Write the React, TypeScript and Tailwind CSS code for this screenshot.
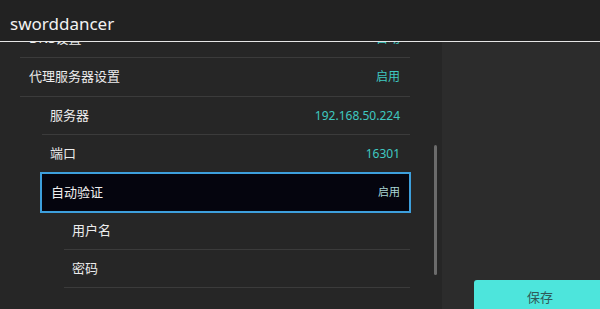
import React from "react";

interface Row {
  label: string;
  value?: string;
  level: 0 | 1 | 2;
  focused?: boolean;
}

const rows: Row[] = [
  { label: "DNS设置", value: "自动", level: 0 },
  { label: "代理服务器设置", value: "启用", level: 0 },
  { label: "服务器", value: "192.168.50.224", level: 1 },
  { label: "端口", value: "16301", level: 1 },
  { label: "自动验证", value: "启用", level: 1, focused: true },
  { label: "用户名", level: 2 },
  { label: "密码", level: 2 },
];

const indent = ["ml-[20px] h-[39px] pl-[9px]", "ml-[42px] h-[38px] pl-[8px]", "ml-[64px] h-[38px] pl-[8px]"];

const SettingRow = ({ row }: { row: Row }) => {
  if (row.focused) {
    return (
      <div className="ml-[40px] mr-[31px] -my-[1px] h-[41px] flex items-center justify-between border-2 border-[#3d9fdc] bg-[#05050e] pl-[9px] pr-[9px] relative z-[1]">
        <span className="text-[13px] text-[#f0f0f0]">{row.label}</span>
        <span className="text-[11px] text-[#a9d6d6]">{row.value}</span>
      </div>
    );
  }
  return (
    <div className={`${indent[row.level]} mr-[32px] flex items-center justify-between border-b border-[#3b3b3b] pr-[10px] first:h-[38px]`}>
      <span className="text-[13px] text-[#ececec]">{row.label}</span>
      {row.value && <span className="text-[12px] text-[#3fc9c1]">{row.value}</span>}
    </div>
  );
};

export default function App() {
  return (
    <div
      className="w-[600px] h-[309px] overflow-hidden bg-[#262626] flex flex-col"
      style={{ fontFamily: "'Noto Sans', 'Noto Sans CJK SC', sans-serif" }}
    >
      <header className="relative z-10 h-[42px] shrink-0 bg-[#222222] border-b border-[#e6e6e6] flex items-center pl-[10px] pt-[5px]">
        <span className="text-[17px] text-[#f2f2f2] leading-none">sworddancer</span>
      </header>

      <div className="flex flex-1 min-h-0">
        <div className="w-[442px] shrink-0 relative">
          <div className="-mt-[22px]">
            {rows.map((r) => (
              <SettingRow key={r.label} row={r} />
            ))}
          </div>
          {/* scrollbar */}
          <div className="absolute left-[434px] top-[103px] w-[3px] h-[130px] bg-[#6b6b6b] rounded-sm" />
        </div>

        <div className="flex-1 bg-[#2c2c2c] flex flex-col justify-end">
          <button className="ml-[32px] h-[29px] bg-[#4de5dc] rounded-tl-[3px] text-[13px] text-[#2f5a58] flex items-center justify-center pl-[6px] pt-[6px]">
            保存
          </button>
        </div>
      </div>
    </div>
  );
}
